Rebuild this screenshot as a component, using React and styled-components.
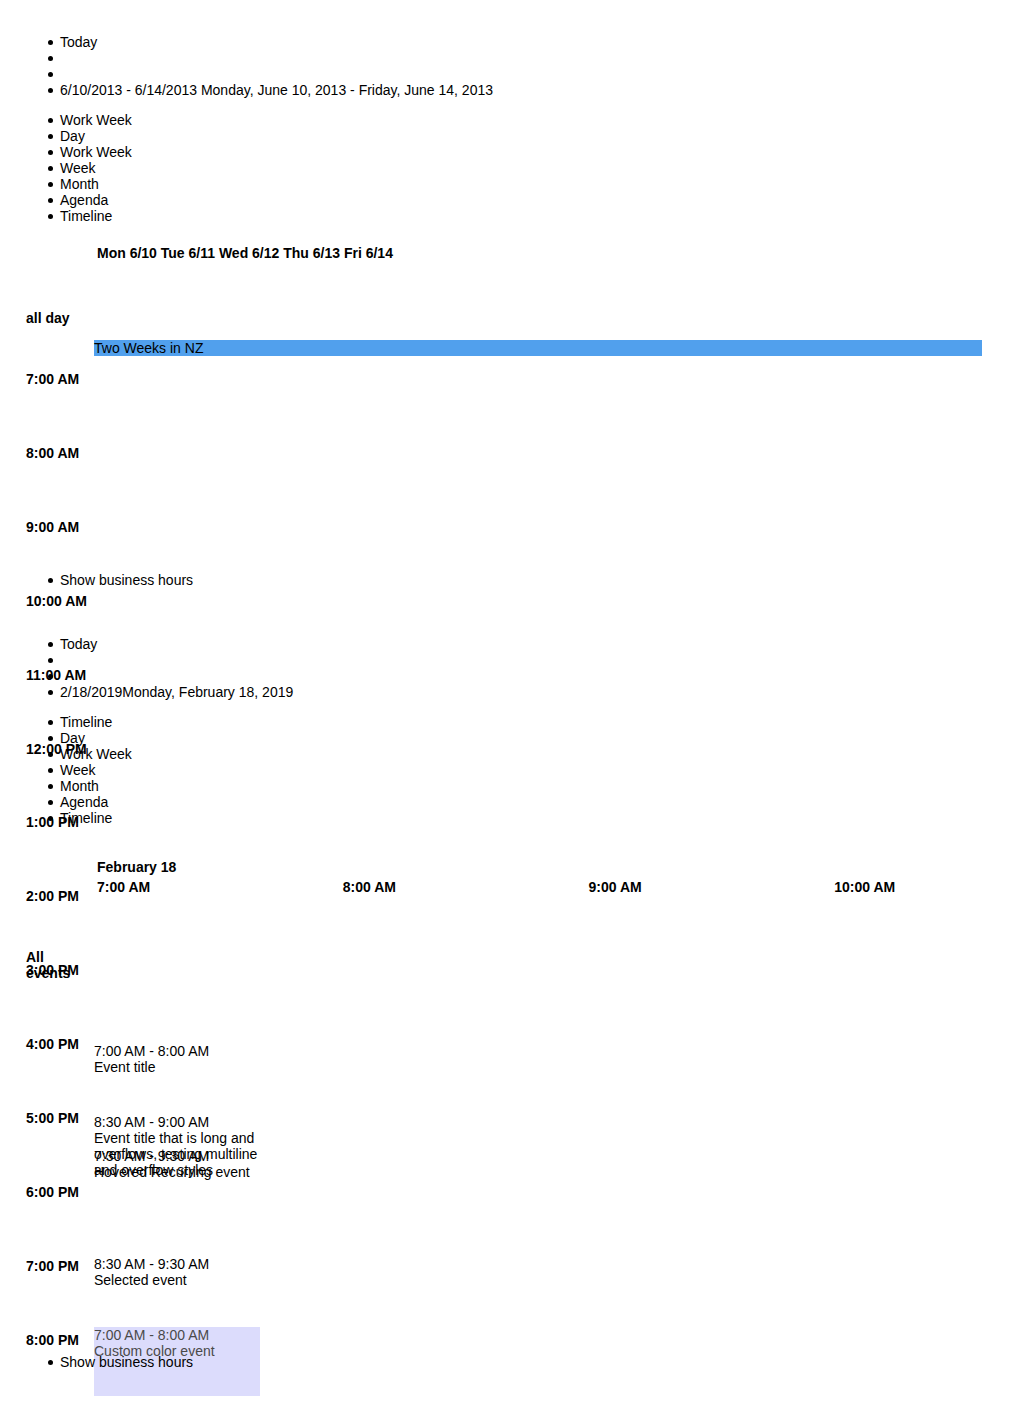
import React from 'react';
import styled, { createGlobalStyle } from 'styled-components';

const GlobalStyle = createGlobalStyle`
  html, body { background: #fff; }
  body {
    margin: 8px;
    font-family: "Liberation Sans", Arial, Helvetica, sans-serif;
    font-size: 14px;
    line-height: 16px;
    color: #000;
  }
`;

const Page = styled.div`
  display: flex;
  flex-direction: column;
  gap: 20px;
  padding: 12px;
`;

const Scheduler = styled.section`
  display: flow-root;
`;

const ToolList = styled.ul`
  margin: 14px 0;
  padding-left: 40px;
  list-style: none;
`;

const ToolItem = styled.li`
  display: flex;
  align-items: center;
  min-height: 16px;
  &::before {
    content: '';
    flex: none;
    width: 5px;
    height: 5px;
    margin: 0 7px 0 -12px;
    border-radius: 50%;
    background: #000;
  }
`;

const View = styled.div`
  display: flow-root;
  height: ${(p) => p.$h}px;
`;

const DayHeader = styled.div`
  box-sizing: border-box;
  height: 72px;
  padding: 7px 0 0 77px;
  font-weight: bold;
  white-space: nowrap;
`;

const RowLabel = styled.div`
  box-sizing: content-box;
  padding-left: 6px;
  font-weight: bold;
  max-width: ${(p) => (p.$maxW ? `${p.$maxW}px` : 'none')};
  margin-top: ${(p) => p.$mt || 0}px;
`;

const AllDayEvent = styled.div`
  margin: 14px 0 0 74px;
  width: 888px;
  height: 16px;
  background: #51a0ed;
  color: #000;
  white-space: nowrap;
`;

const TimeGrid = styled.div`
  margin-top: 15px;
`;

const TimeRow = styled.div`
  height: 73.92px;
  padding-left: 6px;
  font-weight: bold;
`;

const TimelineHeader = styled.div`
  padding: 19px 0 0 74px;
  font-weight: bold;
`;

const HeaderCell = styled.div`
  padding-left: 3px;
  white-space: nowrap;
`;

const TimeCols = styled.div`
  display: grid;
  grid-template-columns: 245.75px 245.75px 245.75px 1fr;
  margin-top: 4px;
`;

const EventList = styled.div`
  margin: 62px 0 0 74px;
  width: 166px;
`;

const Event = styled.div`
  height: ${(p) => p.$h}px;
  background: ${(p) => p.$bg || 'transparent'};
  color: ${(p) => p.$fg || '#000'};
`;

const EventLine = styled.div``;

const dayNames = ['Mon 6/10', 'Tue 6/11', 'Wed 6/12', 'Thu 6/13', 'Fri 6/14'];
const hours = [
  '7:00 AM', '8:00 AM', '9:00 AM', '10:00 AM', '11:00 AM', '12:00 PM',
  '1:00 PM', '2:00 PM', '3:00 PM', '4:00 PM', '5:00 PM', '6:00 PM',
  '7:00 PM', '8:00 PM', '9:00 PM', '10:00 PM', '11:00 PM',
];
const viewNames1 = ['Work Week', 'Day', 'Work Week', 'Week', 'Month', 'Agenda', 'Timeline'];
const viewNames2 = ['Timeline', 'Day', 'Work Week', 'Week', 'Month', 'Agenda', 'Timeline'];

const events = [
  { time: '7:00 AM - 8:00 AM', title: 'Event title', h: 71 },
  { time: '8:30 AM - 9:00 AM', title: 'Event title that is long and overflows, testing multiline and overflow styles', h: 34 },
  { time: '7:30 AM - 9:30 AM', title: 'Hovered Recurring event', h: 108 },
  { time: '8:30 AM - 9:30 AM', title: 'Selected event', h: 71 },
  { time: '7:00 AM - 8:00 AM', title: 'Custom color event', h: 70, bg: '#dcdcfc', fg: '#4a4a4a' },
  { time: '8:00 AM - 9:00 AM', title: 'Event title', h: 70 },
];

function Toolbar({ range, views }) {
  return (
    <>
      <ToolList>
        <ToolItem>Today</ToolItem>
        <ToolItem />
        <ToolItem />
        <ToolItem>{range}</ToolItem>
      </ToolList>
      <ToolList>
        {views.map((v, i) => (
          <ToolItem key={i}>{v}</ToolItem>
        ))}
      </ToolList>
    </>
  );
}

function Footer() {
  return (
    <ToolList>
      <ToolItem>Show business hours</ToolItem>
    </ToolList>
  );
}

export default function App() {
  return (
    <>
      <GlobalStyle />
      <Page>
        <Scheduler>
          <Toolbar
            range="6/10/2013 - 6/14/2013 Monday, June 10, 2013 - Friday, June 14, 2013"
            views={viewNames1}
          />
          <View $h={320}>
            <DayHeader>{dayNames.join(' ')}</DayHeader>
            <RowLabel>all day</RowLabel>
            <AllDayEvent>Two Weeks in NZ</AllDayEvent>
            <TimeGrid>
              {hours.map((h) => (
                <TimeRow key={h}>{h}</TimeRow>
              ))}
            </TimeGrid>
          </View>
          <Footer />
        </Scheduler>

        <Scheduler>
          <Toolbar range="2/18/2019Monday, February 18, 2019" views={viewNames2} />
          <View $h={500}>
            <TimelineHeader>
              <HeaderCell>February 18</HeaderCell>
              <TimeCols>
                {['7:00 AM', '8:00 AM', '9:00 AM', '10:00 AM'].map((t) => (
                  <HeaderCell key={t}>{t}</HeaderCell>
                ))}
              </TimeCols>
            </TimelineHeader>
            <RowLabel $maxW={62} $mt={54}>All events</RowLabel>
            <EventList>
              {events.map((e, i) => (
                <Event key={i} $h={e.h} $bg={e.bg} $fg={e.fg}>
                  <EventLine>{e.time}</EventLine>
                  <EventLine>{e.title}</EventLine>
                </Event>
              ))}
            </EventList>
          </View>
          <Footer />
        </Scheduler>
      </Page>
    </>
  );
}
